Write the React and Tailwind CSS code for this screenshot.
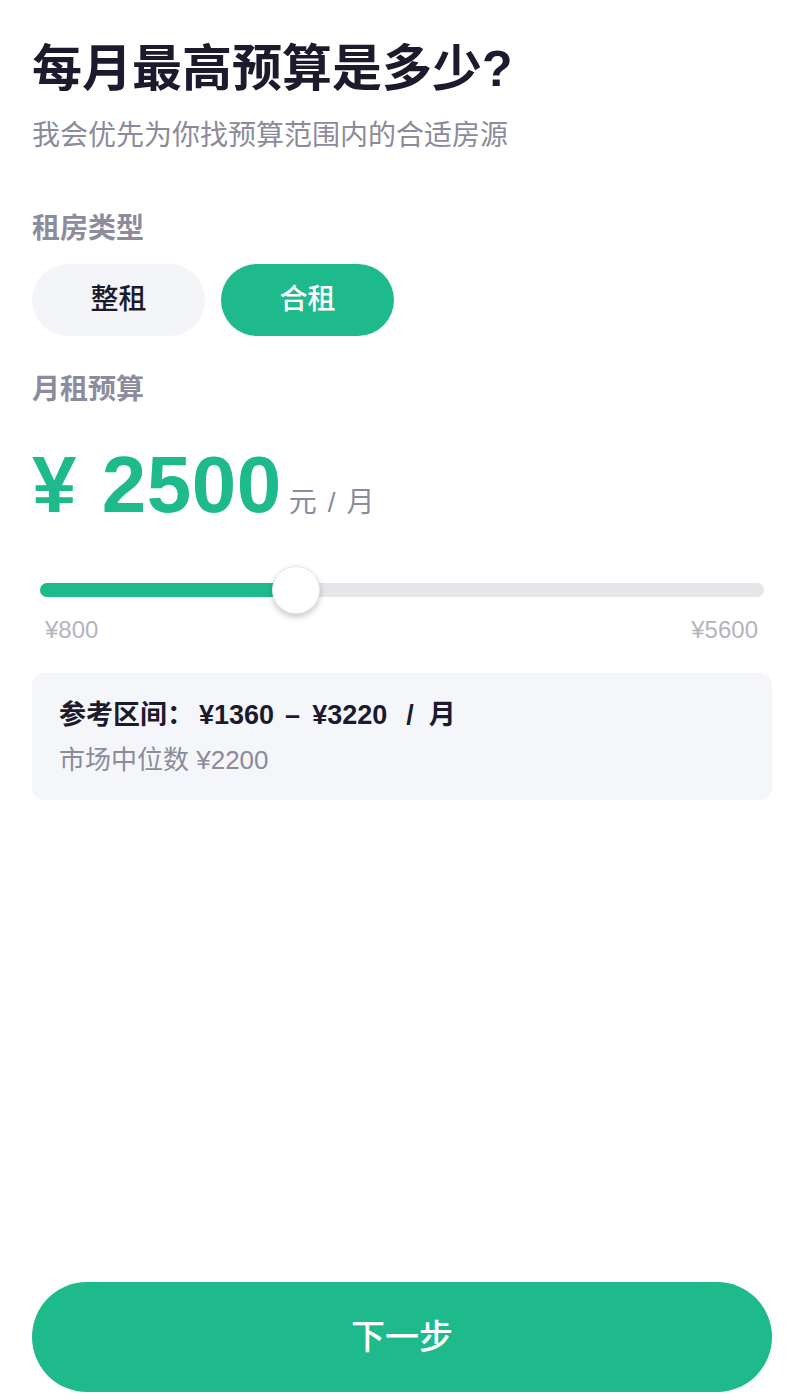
import React, { useState } from "react";

const MIN = 800;
const MAX = 5600;

export default function App() {
  const [type, setType] = useState("shared"); // whole | shared
  const [budget, setBudget] = useState(2500);

  const pct = ((budget - MIN) / (MAX - MIN)) * 100;

  return (
    <div className="min-h-[1400px] flex flex-col bg-white pl-8 pr-[34px] font-['Liberation_Sans','Noto_Sans_CJK_SC',sans-serif]">
      {/* Header */}
      <h1 className="pt-[39px] text-[50px] leading-[60px] font-bold text-[#1c1b2e]">
        每月最高预算是多少?
      </h1>
      <p className="mt-[17px] text-[28px] leading-[40px] text-[#8b8b9c]">
        我会优先为你找预算范围内的合适房源
      </p>

      {/* Rent type */}
      <div className="mt-[53px] text-[28px] leading-[40px] font-semibold text-[#8c8c9e]">
        租房类型
      </div>
      <div className="mt-[15px] flex gap-4">
        <button
          onClick={() => setType("whole")}
          className={
            type === "whole"
              ? "w-[173px] h-[72px] rounded-full bg-[#1fba8b] text-white text-[28px] font-medium"
              : "w-[173px] h-[72px] rounded-full bg-[#f4f5f9] text-[#1c1b2e] text-[28px] font-medium"
          }
        >
          整租
        </button>
        <button
          onClick={() => setType("shared")}
          className={
            type === "shared"
              ? "w-[173px] h-[72px] rounded-full bg-[#1fba8b] text-white text-[28px] font-medium"
              : "w-[173px] h-[72px] rounded-full bg-[#f4f5f9] text-[#1c1b2e] text-[28px] font-medium"
          }
        >
          合租
        </button>
      </div>

      {/* Budget */}
      <div className="mt-[34px] text-[28px] leading-[40px] font-semibold text-[#8c8c9e]">
        月租预算
      </div>
      <div className="mt-[35px] flex items-baseline">
        <span className="text-[80px] leading-[80px] font-bold tracking-[0.5px] text-[#1fba8b]">
          ¥<span className="ml-[2px]"> </span>{budget}
        </span>
        <span className="ml-[7px] text-[28px] leading-none text-[#8b8b9c]">
          元<span className="mx-[11px]">/</span>月
        </span>
      </div>

      {/* Slider */}
      <div className="mt-[41px] mx-2 relative h-12 flex items-center">
        <div className="relative w-full h-[14px] rounded-full bg-[#e5e6ea]">
          <div className="h-full rounded-full bg-[#1fba8b]" style={{ width: `${pct}%` }} />
        </div>
        <input
          type="range"
          min={MIN}
          max={MAX}
          step={10}
          value={budget}
          onChange={(e) => setBudget(Number(e.target.value))}
          className="absolute inset-0 w-full h-full opacity-0 cursor-pointer"
        />
        <div
          className="pointer-events-none absolute top-0 w-12 h-12 -translate-x-1/2 rounded-full bg-white border border-[#e8e8ec] shadow-[0_3px_6px_rgba(0,0,0,0.22)]"
          style={{ left: `${pct}%` }}
        />
      </div>
      <div className="mt-[2px] flex justify-between pl-[13px] pr-[14px] text-[24px] leading-[28px] text-[#b4b4bd]">
        <span>¥800</span>
        <span>¥5600</span>
      </div>

      {/* Reference range */}
      <div className="mt-[29px] rounded-xl bg-[#f5f6fa] px-[27px] pt-[24px] pb-[22px]">
        <div className="flex items-baseline text-[27px] leading-[36px] font-bold text-[#1c1b2e]">
          <span>参考区间：</span>
          <span className="ml-[5px]">¥1360</span>
          <span className="ml-[11px]">–</span>
          <span className="ml-[12px]">¥3220</span>
          <span className="ml-[19px]">/</span>
          <span className="ml-[15px]">月</span>
        </div>
        <div className="mt-[9px] text-[26px] leading-[36px] text-[#8b8b9c]">
          市场中位数 ¥2200
        </div>
      </div>

      {/* Footer button */}
      <div className="mt-auto pb-2">
        <button className="w-full h-[110px] rounded-full bg-[#1fba8b] text-white text-[34px] font-medium">
          下一步
        </button>
      </div>
    </div>
  );
}
